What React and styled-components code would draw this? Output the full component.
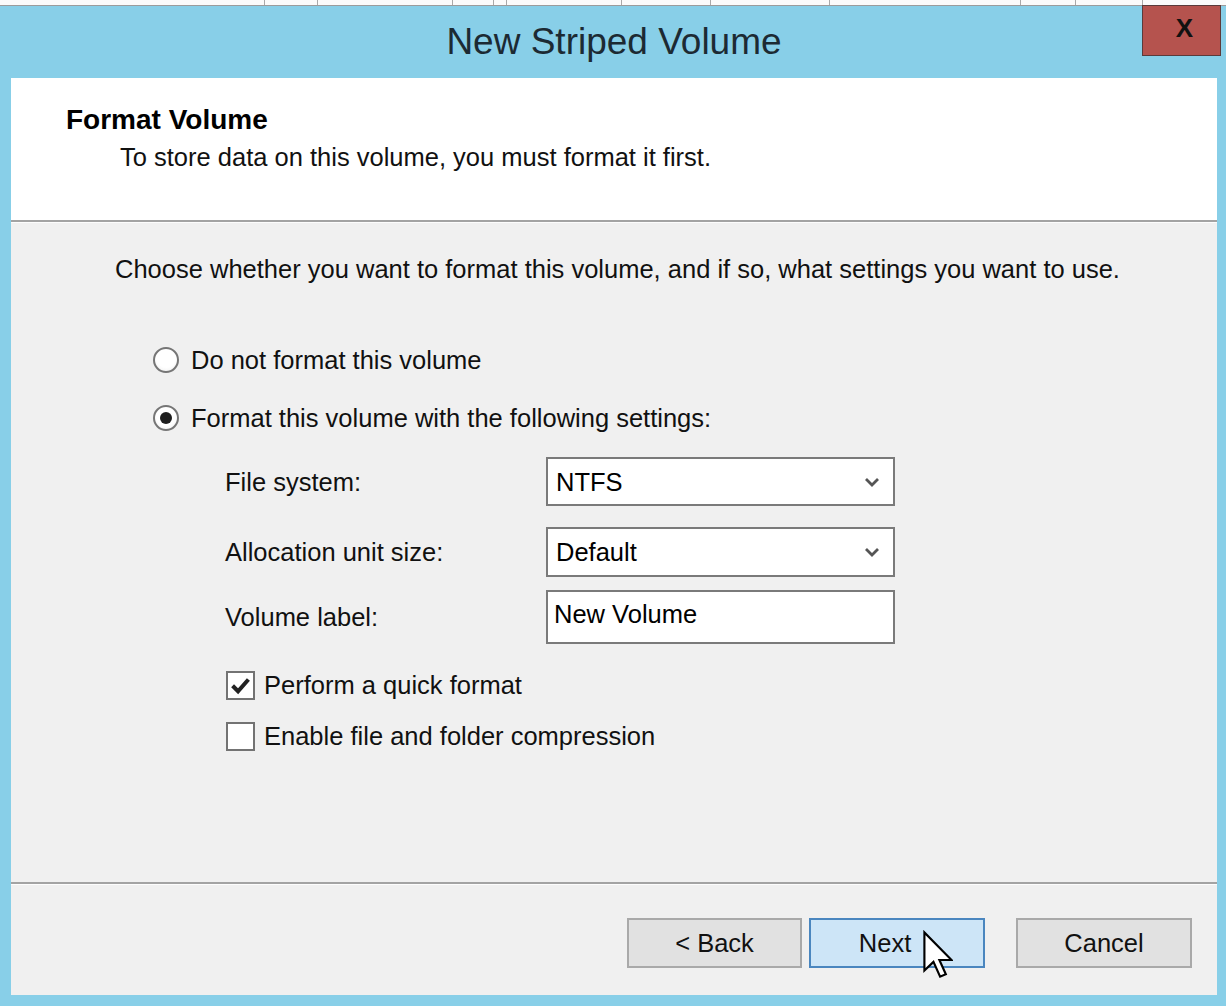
import React from 'react'
import styled, { createGlobalStyle } from 'styled-components'

const GlobalStyle = createGlobalStyle`
  html, body {
    margin: 0;
    padding: 0;
  }
  body {
    width: 1226px;
    height: 1006px;
    overflow: hidden;
    background: #88cfe8;
    font-family: "Liberation Sans", Arial, sans-serif;
  }
`

// the column headers of the window behind, peeking out at the top
const BackStrip = styled.div`
  display: flex;
  height: 5px;
  background: #fbfbfb;
  border-bottom: 1px solid #9c9c9c;
`
const StripCell = styled.div`
  flex-shrink: 0;
  width: ${p => p.$w}px;
  border-right: 1px solid #a9a9a9;
`

const Window = styled.div`
  height: 1000px;
  box-sizing: border-box;
  display: flex;
  flex-direction: column;
  padding: 0 9px 11px 11px;
  background: #88cfe8;
`
const TitleBar = styled.div`
  height: 72px;
  flex-shrink: 0;
  display: grid;
  grid-template-columns: 1fr auto 1fr;
`
const Title = styled.div`
  grid-column: 2;
  font-size: 37px;
  line-height: 72px;
  color: #1c2a33;
`
const CloseButton = styled.div`
  grid-column: 3;
  justify-self: end;
  align-self: start;
  width: 79px;
  height: 51px;
  box-sizing: border-box;
  margin: -1px -4px 0 0;
  display: flex;
  align-items: center;
  justify-content: center;
  background: #b5534e;
  border: 1px solid #5b3b3b;
  color: #111;
  font-size: 26px;
  font-weight: bold;
  padding-left: 6px;
  padding-bottom: 4px;
`

const Client = styled.div`
  flex: 1;
  display: flex;
  flex-direction: column;
  background: #f0f0f0;
`
const Header = styled.div`
  height: 142px;
  box-sizing: border-box;
  padding: 27px 0 0 55px;
  background: #fff;
`
const Heading = styled.div`
  font-size: 28px;
  font-weight: bold;
  line-height: 30px;
  color: #000;
`
const SubHeading = styled.div`
  margin: 7px 0 0 54px;
  font-size: 25.5px;
  line-height: 30px;
  color: #111;
`
const Divider = styled.div`
  height: 2px;
  flex-shrink: 0;
  background: #a3a3a3;
  border-bottom: 1px solid #fdfdfd;
`

const Body = styled.div`
  flex: 1;
  padding: 31px 0 0 104px;
  font-size: 25.5px;
  line-height: 30px;
  color: #111;
`
const Intro = styled.div``

const Options = styled.div`
  margin: 61px 0 0 38px;
`
const RadioRow = styled.div`
  display: flex;
  align-items: center;
  gap: 12px;
  height: 30px;
  margin-top: ${p => p.$top || 0}px;
`
const RadioDot = styled.div`
  width: 26px;
  height: 26px;
  box-sizing: border-box;
  border-radius: 50%;
  border: 2px solid #767676;
  background: radial-gradient(circle at 50% 40%, #fff 55%, #ececec);
  display: flex;
  align-items: center;
  justify-content: center;
  &::after {
    content: '';
    width: 12px;
    height: 12px;
    border-radius: 50%;
    background: #1d1d1d;
    display: ${p => (p.$checked ? 'block' : 'none')};
  }
`

const Settings = styled.div`
  margin: 24px 0 0 110px;
`
const FieldRow = styled.div`
  display: flex;
  align-items: center;
  margin-top: ${p => p.$top || 0}px;
`
const Label = styled.div`
  width: 321px;
  flex-shrink: 0;
`
const SelectBox = styled.div`
  width: 349px;
  height: ${p => p.$h}px;
  box-sizing: border-box;
  display: flex;
  align-items: center;
  justify-content: space-between;
  padding: 0 12px 0 8px;
  background: #fff;
  border: 2px solid #7a7a7a;
  color: #000;
`
const TextBox = styled.div`
  width: 349px;
  height: ${p => p.$h}px;
  box-sizing: border-box;
  padding: 7px 8px 0 6px;
  background: #fff;
  border: 2px solid #7a7a7a;
  color: #000;
`

const Checks = styled.div`
  margin: 26px 0 0 1px;
`
const CheckRow = styled.div`
  display: flex;
  align-items: center;
  gap: 9px;
  height: 30px;
  margin-top: ${p => p.$top || 0}px;
`
const CheckBox = styled.div`
  width: 29px;
  height: 29px;
  box-sizing: border-box;
  display: flex;
  align-items: center;
  justify-content: center;
  background: #fff;
  border: 2px solid #737373;
`

const Footer = styled.div`
  height: 110px;
  box-sizing: border-box;
  display: flex;
  justify-content: flex-end;
  align-items: flex-start;
  padding: 33px 25px 0 0;
`
const Button = styled.div`
  position: relative;
  width: ${p => p.$w}px;
  height: 50px;
  box-sizing: border-box;
  margin-left: ${p => p.$gap || 0}px;
  display: flex;
  align-items: center;
  justify-content: center;
  padding-right: ${p => p.$shift || 0}px;
  font-size: 25.5px;
  color: #111;
  background: ${p => (p.$primary ? '#cde5f7' : '#e1e1e1')};
  border: 2px solid ${p => (p.$primary ? '#4a86bf' : '#a9a9a9')};
`
const Pointer = styled.svg`
  position: absolute;
  left: 111px;
  top: 10px;
`

const Chevron = () => (
  <svg width="18" height="12" viewBox="0 0 18 12">
    <path d="M3 3 L9 9 L15 3" fill="none" stroke="#555" strokeWidth="2.8" />
  </svg>
)

const Tick = () => (
  <svg width="23" height="23" viewBox="0 0 16 16">
    <path d="M2.5 8.2 L6.3 12 L13.5 3.8" fill="none" stroke="#222" strokeWidth="2.8" />
  </svg>
)

const stripCells = [264, 52, 134, 40, 12, 114, 88, 118, 190, 54, 66]

export default function App() {
  return (
    <>
      <GlobalStyle />
      <BackStrip>
        {stripCells.map((w, i) => (
          <StripCell key={i} $w={w} />
        ))}
      </BackStrip>
      <Window>
        <TitleBar>
          <Title>New Striped Volume</Title>
          <CloseButton>X</CloseButton>
        </TitleBar>
        <Client>
          <Header>
            <Heading>Format Volume</Heading>
            <SubHeading>To store data on this volume, you must format it first.</SubHeading>
          </Header>
          <Divider />
          <Body>
            <Intro>Choose whether you want to format this volume, and if so, what settings you want to use.</Intro>
            <Options>
              <RadioRow>
                <RadioDot />
                Do not format this volume
              </RadioRow>
              <RadioRow $top={28}>
                <RadioDot $checked />
                Format this volume with the following settings:
              </RadioRow>
            </Options>
            <Settings>
              <FieldRow>
                <Label>File system:</Label>
                <SelectBox $h={49}>
                  NTFS
                  <Chevron />
                </SelectBox>
              </FieldRow>
              <FieldRow $top={21}>
                <Label>Allocation unit size:</Label>
                <SelectBox $h={50}>
                  Default
                  <Chevron />
                </SelectBox>
              </FieldRow>
              <FieldRow $top={13}>
                <Label>Volume label:</Label>
                <TextBox $h={54}>New Volume</TextBox>
              </FieldRow>
              <Checks>
                <CheckRow>
                  <CheckBox>
                    <Tick />
                  </CheckBox>
                  Perform a quick format
                </CheckRow>
                <CheckRow $top={21}>
                  <CheckBox />
                  Enable file and folder compression
                </CheckRow>
              </Checks>
            </Settings>
          </Body>
          <Divider />
          <Footer>
            <Button $w={175}>&lt; Back</Button>
            <Button $w={176} $gap={7} $primary $shift={24}>
              Next
              <Pointer width="31" height="50" viewBox="0 0 13 21">
                <path
                  d="M1 1 L1 17 L4.8 13.4 L7.6 19.6 L10 18.6 L7.3 12.6 L12.4 12.6 Z"
                  fill="#fff"
                  stroke="#000"
                  strokeWidth="0.9"
                  strokeLinejoin="miter"
                />
              </Pointer>
            </Button>
            <Button $w={176} $gap={31}>Cancel</Button>
          </Footer>
        </Client>
      </Window>
    </>
  )
}
